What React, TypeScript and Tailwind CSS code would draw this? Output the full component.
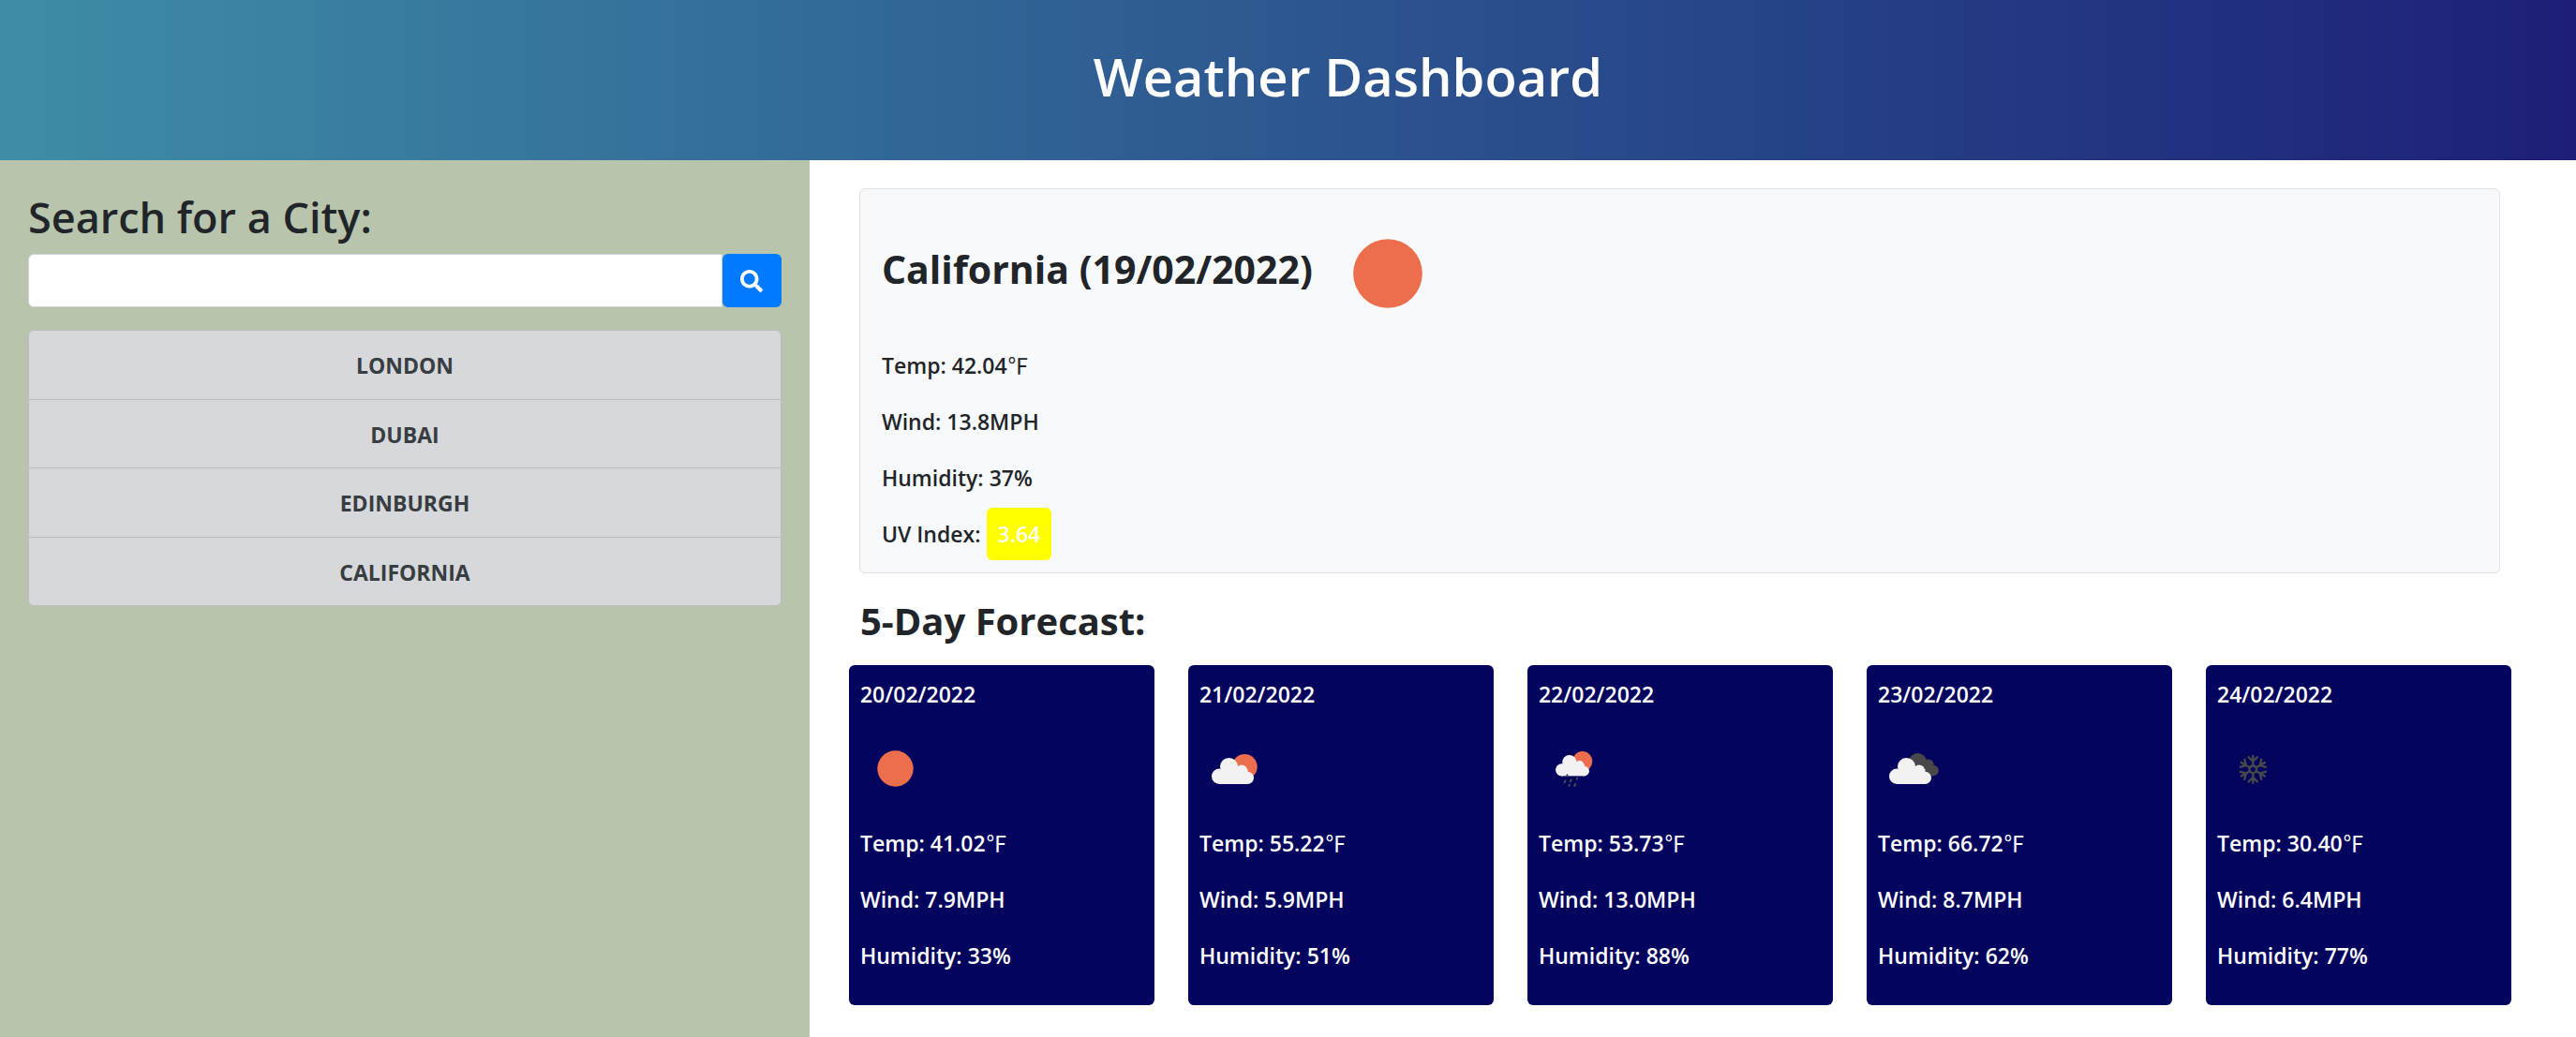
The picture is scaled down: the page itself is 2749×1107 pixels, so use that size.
import React from "react";
import { FaSearch } from "react-icons/fa";

type Icon = "sun" | "fewClouds" | "rain" | "clouds" | "snow";

const cities = ["LONDON", "DUBAI", "EDINBURGH", "CALIFORNIA"];

const forecast: { date: string; icon: Icon; temp: string; wind: string; humidity: string }[] = [
  { date: "20/02/2022", icon: "sun", temp: "41.02", wind: "7.9", humidity: "33" },
  { date: "21/02/2022", icon: "fewClouds", temp: "55.22", wind: "5.9", humidity: "51" },
  { date: "22/02/2022", icon: "rain", temp: "53.73", wind: "13.0", humidity: "88" },
  { date: "23/02/2022", icon: "clouds", temp: "66.72", wind: "8.7", humidity: "62" },
  { date: "24/02/2022", icon: "snow", temp: "30.40", wind: "6.4", humidity: "77" },
];

/* White cloud, 45 wide and 28 high, with its top-left corner at 0,0 */
function Cloud({ transform }: { transform: string }) {
  return (
    <g transform={transform} fill="#f2f2f2">
      <circle cx="8.2" cy="19.8" r="8.2" />
      <circle cx="18.5" cy="9.5" r="9.5" />
      <circle cx="32" cy="13.5" r="6" />
      <circle cx="38.4" cy="21.4" r="6.6" />
      <rect x="8" y="12" width="30.5" height="16" />
    </g>
  );
}

function WeatherIcon({ icon, className }: { icon: Icon; className: string }) {
  return (
    <svg viewBox="0 0 75 75" className={className} role="img" aria-label={icon}>
      {icon === "sun" && <circle cx="37.5" cy="37.5" r="19.2" fill="#ec6e4c" />}
      {icon === "fewClouds" && (
        <>
          <circle cx="48.2" cy="35.5" r="13.5" fill="#ec6e4c" />
          <Cloud transform="translate(13 26)" />
        </>
      )}
      {icon === "rain" && (
        <>
          <circle cx="46.7" cy="29.7" r="10.6" fill="#ec6e4c" />
          <Cloud transform="translate(18 23) scale(0.8)" />
          <g stroke="#48484a" strokeWidth="2" strokeLinecap="round">
            <path d="M30.5 44.4l-.4 1M28.5 50.4l-1 2M34.8 49.3l-1 2M41.2 47.6l-.4 1M32.9 54.8l-.4 1M39.2 54l-1 2" />
          </g>
        </>
      )}
      {icon === "clouds" && (
        <>
          <g fill="#48484a">
            <circle cx="42.5" cy="30.5" r="9.5" />
            <circle cx="54" cy="33" r="5.5" />
            <circle cx="59" cy="39.5" r="5.8" />
            <rect x="42" y="32" width="17" height="13.3" />
          </g>
          <Cloud transform="translate(12 26)" />
        </>
      )}
      {icon === "snow" && (
        <g transform="translate(38.3 38.3)" stroke="#48484a" strokeWidth="2.4" fill="none" strokeLinecap="round">
          <circle r="3.8" />
          {[0, 60, 120, 180, 240, 300].map((a) => (
            <path key={a} d="M0 -4V-14.4M-4.6 -13L0 -8.6L4.6 -13" transform={`rotate(${a})`} />
          ))}
        </g>
      )}
    </svg>
  );
}

function Temperature({ value }: { value: string }) {
  return (
    <p>
      Temp: {value}
      <span className="font-['Noto_Sans_CJK_JP',sans-serif] leading-none font-normal">℉</span>
    </p>
  );
}

export default function App() {
  return (
    <div className="flex min-h-screen flex-col bg-white font-['Open_Sans','Noto_Sans',sans-serif] text-[23px] leading-9 font-semibold text-[#212529]">
      <header className="bg-linear-to-r from-[#3e8da6] via-[#2d5790] to-[#1e1e78] pt-[45px] pb-[54px] pl-32 text-center">
        <h1 className="text-[56px] leading-[72px] text-white">Weather Dashboard</h1>
      </header>

      <div className="grid flex-1 grid-cols-[11fr_24fr]">
        <aside className="bg-[#b8c4ac] p-[30px]">
          <form onSubmit={(e) => e.preventDefault()}>
            <label htmlFor="city" className="block pt-0.5 pb-2.5 text-[45px] leading-[58px]">
              Search for a City:
            </label>
            <div className="flex h-[57px]">
              <input
                id="city"
                type="text"
                className="min-w-0 flex-1 rounded-l-md border border-[#ced4da] bg-white px-4 outline-none"
              />
              <button
                type="submit"
                aria-label="Search"
                className="flex w-[63px] items-center justify-center rounded-md bg-[#007bff] text-white"
              >
                <FaSearch className="size-6" />
              </button>
            </div>
          </form>
          <div className="mt-6 flex h-[295px] flex-col divide-y divide-[#bbbdc0] overflow-hidden rounded-md border border-[#bbbdc0] bg-[#d6d8db]">
            {cities.map((c) => (
              <button key={c} type="button" className="flex-1 pt-0.5 text-center font-bold text-[#383d41]">
                {c}
              </button>
            ))}
          </div>
        </aside>

        <main className="pt-[30px] pr-[69px] pl-[42px]">
          <section className="mr-3 ml-[11px] rounded-md border border-[#dee2e6] bg-[#f8f9fb] px-[23px] pt-[18px] pb-[23px]">
            <div className="mb-2 flex items-center">
              <h2 className="pb-2.5 text-[41px] leading-[50px] font-bold">California (19/02/2022)</h2>
              <WeatherIcon icon="sun" className="ml-2 size-36" />
            </div>
            <div className="flex flex-col gap-6">
              <Temperature value="42.04" />
              <p>Wind: 13.8MPH</p>
              <p>Humidity: 37%</p>
              <p>
                UV Index:{" "}
                <span className="rounded-md bg-[#ffff00] px-3 py-3 text-white">3.64</span>
              </p>
            </div>
          </section>

          <h2 className="mx-3 mt-[26px] mb-[22px] text-[40px] leading-[50px] font-bold">5-Day Forecast:</h2>

          <div className="grid grid-cols-5 gap-9">
            {forecast.map((d) => (
              <article
                key={d.date}
                className="flex flex-col gap-6 rounded-md bg-[#03045e] px-3 pt-[13px] pb-[35px] text-white"
              >
                <h3>{d.date}</h3>
                <WeatherIcon icon={d.icon} className="size-[75px]" />
                <Temperature value={d.temp} />
                <p>Wind: {d.wind}MPH</p>
                <p>Humidity: {d.humidity}%</p>
              </article>
            ))}
          </div>
        </main>
      </div>
    </div>
  );
}
